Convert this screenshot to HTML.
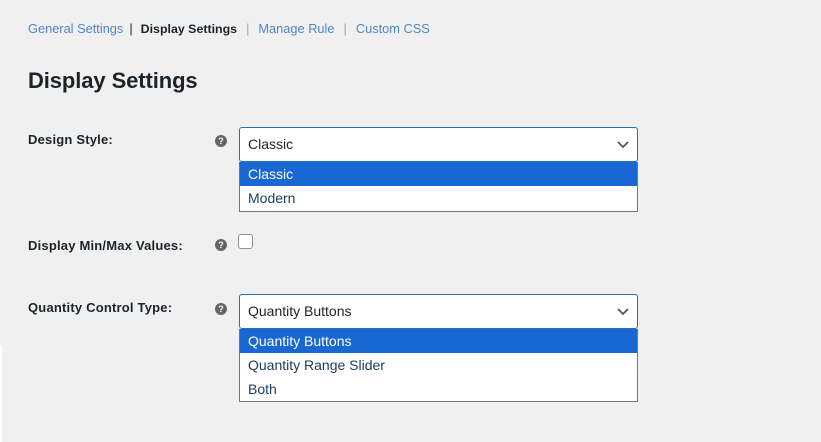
<!DOCTYPE html>
<html><head><style>
body{margin:0;width:821px;height:442px;background:#f0f0f1;font-family:"Liberation Sans",sans-serif;position:relative;overflow:hidden}
.a{position:absolute;white-space:nowrap}
.nav{top:21px;left:28px;font-size:12.8px;color:#4f86c6}
.nav b{color:#1d2327;font-weight:bold;font-size:12.4px}
.nav span.s{color:#8aa8cc;margin:0 9px}
h1{position:absolute;top:68px;left:28px;margin:0;font-size:22px;font-weight:bold;color:#1d2327;letter-spacing:-0.1px}
.lbl{font-size:13px;font-weight:bold;color:#1d2327;left:28px;letter-spacing:0.2px}
.q{width:12px;height:12px;border-radius:50%;background:#666;color:#fff;font-size:9px;font-weight:bold;text-align:center;line-height:12px}
.sel{left:239px;width:397px;height:33px;border:1px solid #2271b1;border-radius:3px;background:#fff;font-size:14px;color:#1d2327;line-height:33px;box-sizing:content-box}
.sel span{padding-left:8px}
.sel svg{position:absolute;right:8px;top:13px}
.list{left:239px;width:399px;border:1px solid #767676;border-top:none;background:#fff;font-size:14px;color:#1d3c5a;box-sizing:border-box}
.list div{height:24px;line-height:24px;padding-left:8px}
.list .h{background:#1967d2;color:#fff}
.cb{left:238px;top:234px;width:13px;height:13px;border:1px solid #8c8f94;border-radius:3px;background:#fff}
</style></head><body>
<div style="position:absolute;left:0;top:345px;width:2px;height:97px;background:#fff"></div>
<div class="a nav">General Settings<span class="s" style="color:#1d2327;margin:0 8px 0 6px">|</span><b>Display Settings</b><span class="s">|</span>Manage Rule<span class="s">|</span>Custom CSS</div>
<h1>Display Settings</h1>
<div class="a lbl" style="top:132px">Design Style:</div>
<div class="a q" style="left:215px;top:135px">?</div>
<div class="a sel" style="top:127px"><span>Classic</span><svg width="12" height="8" viewBox="0 0 12 8"><path d="M1 1l5 5 5-5" stroke="#50575e" stroke-width="1.8" fill="none"/></svg></div>
<div class="a list" style="top:162px;height:50px"><div class="h">Classic</div><div>Modern</div></div>
<div class="a lbl" style="top:238px">Display Min/Max Values:</div>
<div class="a q" style="left:215px;top:239px">?</div>
<div class="a cb"></div>
<div class="a lbl" style="top:300px">Quantity Control Type:</div>
<div class="a q" style="left:215px;top:303px">?</div>
<div class="a sel" style="top:294px"><span>Quantity Buttons</span><svg width="12" height="8" viewBox="0 0 12 8"><path d="M1 1l5 5 5-5" stroke="#50575e" stroke-width="1.8" fill="none"/></svg></div>
<div class="a list" style="top:329px;height:73px"><div class="h">Quantity Buttons</div><div>Quantity Range Slider</div><div>Both</div></div>
</body></html>
